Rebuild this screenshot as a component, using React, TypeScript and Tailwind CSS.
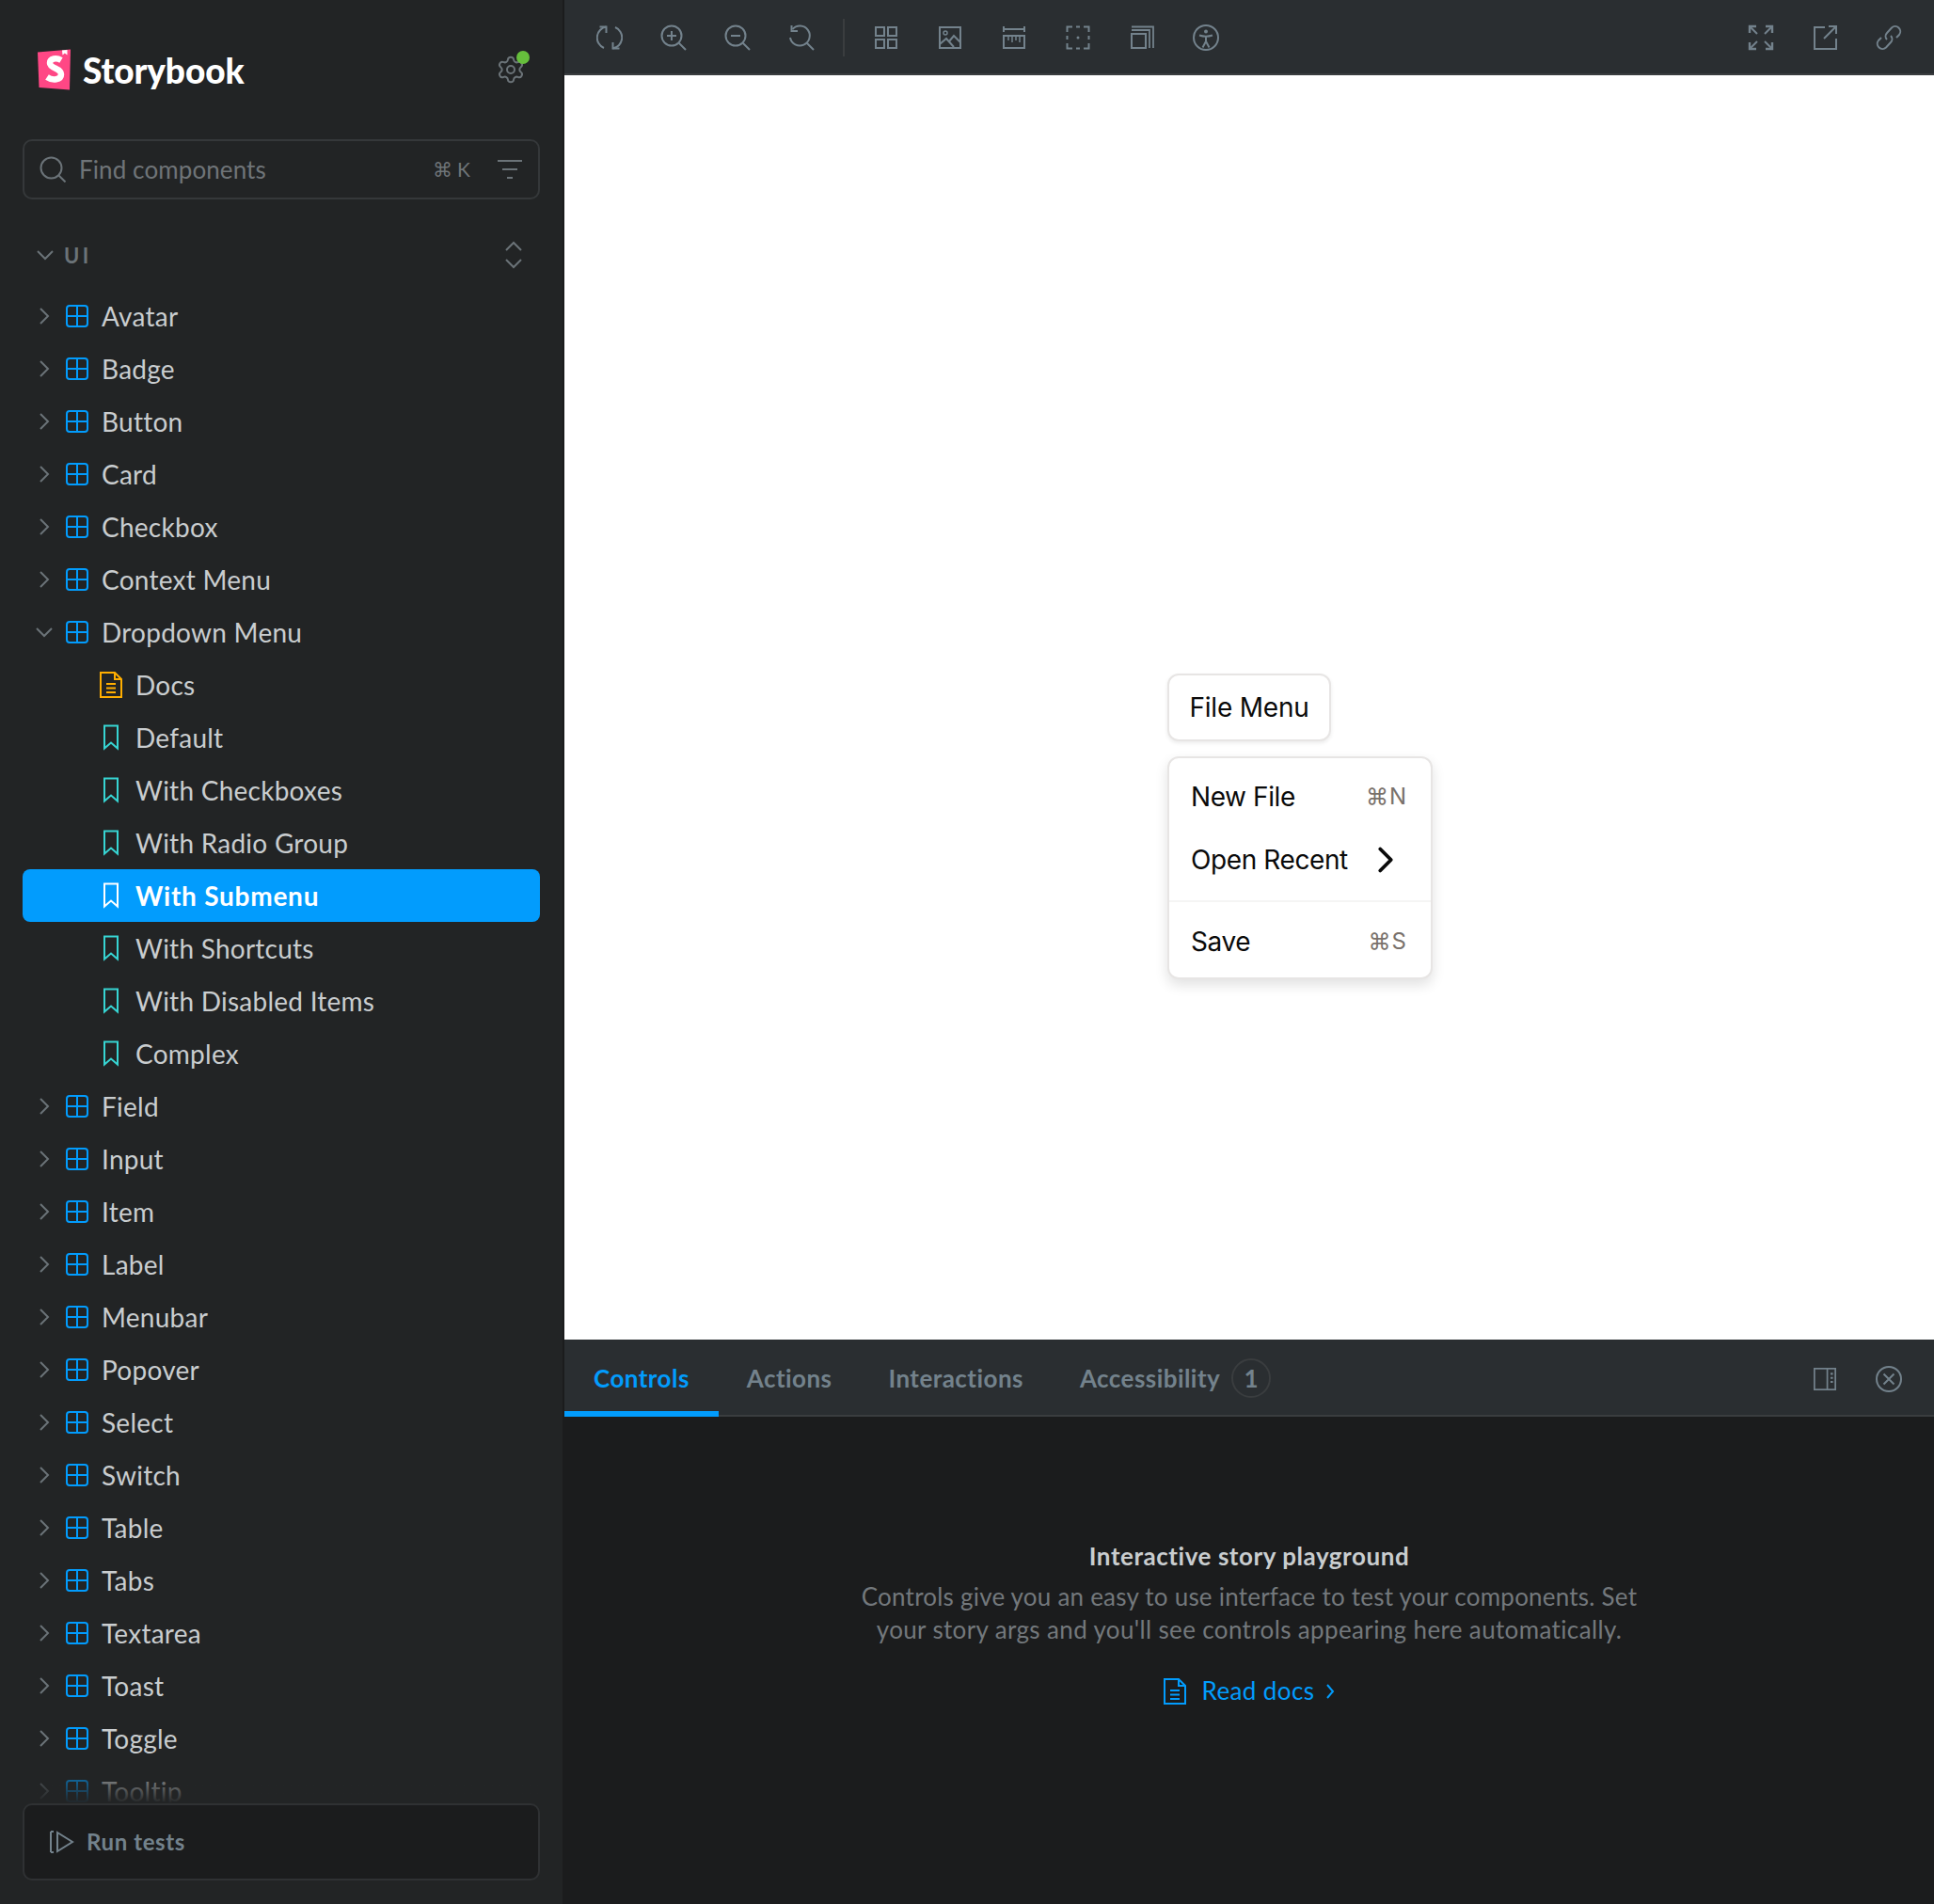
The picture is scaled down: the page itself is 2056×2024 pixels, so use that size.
import { ReactNode } from "react";
import { Settings } from "lucide-react";

const sans = "font-['Lato','Noto_Sans',sans-serif]";

const Ico = ({ children, size = 28, className = "text-[#73828c]" }: { children: ReactNode; size?: number; className?: string }) => (
  <svg width={size} height={size} viewBox="0 0 28 28" fill="none" stroke="currentColor" strokeWidth="2" className={className}>
    {children}
  </svg>
);

const ChevronR = () => (
  <svg width="12" height="20" viewBox="0 0 12 20" fill="none" stroke="#6b7378" strokeWidth="2" className="shrink-0">
    <path d="M2 2l8 8-8 8" />
  </svg>
);
const ChevronD = () => (
  <svg width="20" height="12" viewBox="0 0 20 12" fill="none" stroke="#6b7378" strokeWidth="2" className="shrink-0">
    <path d="M2 2l8 8 8-8" />
  </svg>
);

const ComponentIcon = () => (
  <svg width="24" height="24" viewBox="0 0 24 24" fill="none" stroke="#029cfd" strokeWidth="2" className="shrink-0">
    <rect x="1" y="1" width="22" height="22" rx="3" />
    <path d="M12 1v22M1 12h22" />
  </svg>
);

const Bookmark = ({ color = "#37d5d3" }: { color?: string }) => (
  <svg width="16" height="28" viewBox="0 0 16 28" fill="none" stroke={color} strokeWidth="2" className="shrink-0">
    <path d="M1 1.500h14v24l-7-6-7 6z" />
  </svg>
);

const DocIcon = ({ color }: { color: string }) => (
  <svg width="24" height="28" viewBox="0 0 24 28" fill="none" stroke={color} strokeWidth="2">
    <path d="M1 1h15l7 7v19H1z" />
    <path d="M16 1v7h7" />
    <path d="M7 13h10M7 17.500h10M7 22h10" />
  </svg>
);

type Row = { label: string; kind?: "comp" | "open" | "docs" | "story" | "active" };

const rows: Row[] = [
  { label: "Avatar" },
  { label: "Badge" },
  { label: "Button" },
  { label: "Card" },
  { label: "Checkbox" },
  { label: "Context Menu" },
  { label: "Dropdown Menu", kind: "open" },
  { label: "Docs", kind: "docs" },
  { label: "Default", kind: "story" },
  { label: "With Checkboxes", kind: "story" },
  { label: "With Radio Group", kind: "story" },
  { label: "With Submenu", kind: "active" },
  { label: "With Shortcuts", kind: "story" },
  { label: "With Disabled Items", kind: "story" },
  { label: "Complex", kind: "story" },
  { label: "Field" },
  { label: "Input" },
  { label: "Item" },
  { label: "Label" },
  { label: "Menubar" },
  { label: "Popover" },
  { label: "Select" },
  { label: "Switch" },
  { label: "Table" },
  { label: "Tabs" },
  { label: "Textarea" },
  { label: "Toast" },
  { label: "Toggle" },
  { label: "Tooltip" },
];

const TreeRow = ({ label, kind = "comp" }: Row) => {
  if (kind === "active") {
    return (
      <div className="flex h-14 shrink-0 items-center rounded-lg bg-[#029cfd] pl-[86px]">
        <Bookmark color="#ffffff" />
        <span className="ml-[18px] text-[28px] font-bold tracking-[0.75px] text-white">{label}</span>
      </div>
    );
  }
  if (kind === "story" || kind === "docs") {
    return (
      <div className="flex h-14 shrink-0 items-center">
        {kind === "docs" ? (
          <div className="ml-[82px] mr-[14px]">
            <DocIcon color="#ffae00" />
          </div>
        ) : (
          <div className="ml-[86px] mr-[18px]">
            <Bookmark />
          </div>
        )}
        <span className="text-[28px] tracking-[0.25px] text-[#c9cdcf]">{label}</span>
      </div>
    );
  }
  return (
    <div className="flex h-14 shrink-0 items-center">
      <div className="flex w-[46px] justify-center">{kind === "open" ? <ChevronD /> : <ChevronR />}</div>
      <ComponentIcon />
      <span className="ml-[14px] text-[28px] tracking-[0.25px] text-[#c9cdcf]">{label}</span>
    </div>
  );
};

const Sidebar = () => (
  <aside className="flex h-full w-[600px] shrink-0 flex-col border-r-2 border-[#1b1c1d] bg-[#222425] pl-[24px] pr-[24px]">
    {/* brand */}
    <div className="flex h-[148px] shrink-0 items-start">
      <div className="mt-[52px] ml-[16px] flex items-center">
        <svg width="36" height="44" viewBox="0 0 36 44">
          <path d="M0 3.500L35 .5 34 43.500 1.500 41z" fill="#ff4785" />
          <path d="M26 1.500l5.500-.5v5.500l-2.700-2-2.300 2z" fill="#ffffff" />
          <path d="M25 12C20 9 13 10 13 15c0 6 12 5 12 12 0 6-9 7-15 3" fill="none" stroke="#ffffff" strokeWidth="6.500" />
        </svg>
        <span className="ml-[12px] text-[37px] font-black leading-none tracking-[-0.1px] text-white">Storybook</span>
      </div>
      <div className="relative ml-auto mr-[15px] mt-[58px]">
        <Settings size={32} strokeWidth={1.5} color="#6b7378" />
        <div className="absolute -right-[4px] -top-[4px] h-[14px] w-[14px] rounded-full bg-[#66bf3c]" />
      </div>
    </div>

    {/* search */}
    <div className="flex h-[64px] shrink-0 items-center rounded-[10px] border-2 border-[#35383a] pl-[16px] pr-[17px]">
      <svg width="28" height="28" viewBox="0 0 28 28" fill="none" stroke="#6b7378" strokeWidth="2">
        <circle cx="12.500" cy="12.500" r="11" />
        <path d="M20.500 20.500l7 7" />
      </svg>
      <span className="ml-[14px] text-[26px] tracking-[0.1px] text-[#6f7478]">Find components</span>
      <span className="ml-auto text-[21px] text-[#6f7478]">⌘ K</span>
      <svg width="26" height="22" viewBox="0 0 26 22" stroke="#6b7378" strokeWidth="2" className="ml-[29px]">
        <path d="M0 2h26M5 11h16M10 20h6" />
      </svg>
    </div>

    {/* section header */}
    <div className="mt-[31px] flex h-[56px] shrink-0 items-center">
      <div className="ml-[14px]">
        <ChevronD />
      </div>
      <span className="ml-[10px] text-[22px] font-bold tracking-[3.5px] text-[#6b7378]">UI</span>
      <svg width="20" height="30" viewBox="0 0 20 30" fill="none" stroke="#6b7378" strokeWidth="2" className="ml-auto mr-[18px]">
        <path d="M2 10l8-8 8 8M2 20l8 8 8-8" />
      </svg>
    </div>

    {/* tree */}
    <div className="relative mt-[9px] flex min-h-0 flex-1 flex-col overflow-hidden">
      {rows.map((r) => (
        <TreeRow key={r.label} {...r} />
      ))}
      <div className="absolute bottom-0 left-0 right-0 h-[48px] bg-gradient-to-b from-[#22242500] to-[#222425]" />
    </div>

    {/* bottom */}
    <div className="mb-[25px] flex h-[82px] shrink-0 items-center rounded-[10px] border-2 border-[#2f3133] bg-[#1b1c1d] pl-[27px]">
      <svg width="26" height="24" viewBox="0 0 26 24" fill="none" stroke="#73828c" strokeWidth="2">
        <path d="M1 1v22M1 1h3M1 23h3M8 2l16 10-16 10z" />
      </svg>
      <span className="ml-[13px] text-[24px] font-bold tracking-[0.6px] text-[#73828c]">Run tests</span>
    </div>
  </aside>
);

const ToolBtn = ({ children }: { children: ReactNode }) => (
  <button className="flex h-14 w-14 items-center justify-center">{children}</button>
);

const Toolbar = () => (
  <div className="flex h-20 shrink-0 items-center border-b-2 border-[#3a3d3f] bg-[#2a2e31] px-5 pt-[2px]">
    <div className="flex gap-3">
      <ToolBtn>
        <Ico>
          <path d="M10.500 2.500A11.800 11.800 0 0 0 8 25M17.500 25.500A11.800 11.800 0 0 0 20 3" />
          <path d="M3.500 2.500h7V9M24.500 25.500h-7V19" />
        </Ico>
      </ToolBtn>
      <ToolBtn>
        <Ico>
          <circle cx="12" cy="12" r="10.500" />
          <path d="M19.500 19.500L27 27M12 7v10M7 12h10" />
        </Ico>
      </ToolBtn>
      <ToolBtn>
        <Ico>
          <circle cx="12" cy="12" r="10.500" />
          <path d="M19.500 19.500L27 27M7 12h10" />
        </Ico>
      </ToolBtn>
      <ToolBtn>
        <Ico>
          <path d="M4.500 5A10.500 10.500 0 1 1 2 14" />
          <path d="M19.500 19.500L27 27M3.500 1v6h6.500" />
        </Ico>
      </ToolBtn>
    </div>
    <div className="ml-4 mr-4 h-10 w-[2px] bg-[#3a3d3f]" />
    <div className="flex gap-3">
      <ToolBtn>
        <Ico>
          <rect x="3" y="3" width="9" height="9" />
          <rect x="16" y="3" width="9" height="9" />
          <rect x="3" y="16" width="9" height="9" />
          <rect x="16" y="16" width="9" height="9" />
        </Ico>
      </ToolBtn>
      <ToolBtn>
        <Ico>
          <rect x="3" y="3" width="22" height="22" />
          <circle cx="9" cy="9" r="2" strokeWidth="1.500" />
          <path d="M3 21l7-6 8 9M13 18l5-6 7 7" />
        </Ico>
      </ToolBtn>
      <ToolBtn>
        <Ico>
          <path d="M3 5h22M3 2v6M25 2v6" />
          <rect x="3" y="12" width="22" height="13" />
          <path d="M8 12v5M12 12v7M16 12v5M20 12v7" strokeWidth="1.500" />
        </Ico>
      </ToolBtn>
      <ToolBtn>
        <Ico>
          <path d="M2.500 8V2.500H8M12 2.500h4M20 2.500h5.500V8M25.500 12v4M25.500 20v5.500H20M16 25.500h-4M8 25.500H2.500V20M2.500 16v-4" />
          <circle cx="14" cy="14" r="1.500" fill="currentColor" stroke="none" />
        </Ico>
      </ToolBtn>
      <ToolBtn>
        <Ico>
          <rect x="3" y="10" width="15" height="15" />
          <path d="M3 6h19v19M3 2.500h23V25" strokeWidth="1.800" />
        </Ico>
      </ToolBtn>
      <ToolBtn>
        <Ico>
          <circle cx="14" cy="14" r="13" />
          <circle cx="14" cy="7.500" r="2" fill="currentColor" stroke="none" />
          <path d="M7 11.500c4.500 1.500 9.500 1.500 14 0M14 13v5M14 18l-3.500 6.500M14 18l3.500 6.500" />
        </Ico>
      </ToolBtn>
    </div>
    <div className="ml-auto flex gap-3">
      <ToolBtn>
        <Ico>
          <path d="M2 2l8 8M18 10l8-8M2 26l8-8M18 18l8 8" />
          <path d="M2 9V2h7M19 2h7v7M2 19v7h7M26 19v7h-7" strokeWidth="2.400" />
        </Ico>
      </ToolBtn>
      <ToolBtn>
        <Ico>
          <path d="M14 3H3v23h23V15" />
          <path d="M13 15L26 2M18 2h8v8" />
        </Ico>
      </ToolBtn>
      <ToolBtn>
        <Ico>
          <path d="M12 16a5 5 0 0 1 0-7l5-5.500a5.500 5.500 0 0 1 8 7.500l-3 3" />
          <path d="M16 12a5 5 0 0 1 0 7l-5 5.500a5.500 5.500 0 0 1-8-7.500l3-3" />
        </Ico>
      </ToolBtn>
    </div>
  </div>
);

const Canvas = () => (
  <div className="relative flex min-h-0 flex-1 items-center justify-center bg-white font-['Inter',sans-serif] text-[#0a0a0a]">
    <button className="flex h-[72px] w-[174px] items-center justify-center rounded-xl border-2 border-[#e7e5e4] bg-white text-[28px] tracking-[-0.2px] shadow-[0_2px_4px_rgba(0,0,0,0.08)]">
      File Menu
    </button>
    {/* open dropdown sits over the canvas */}
    <div className="absolute left-[641px] top-[724px] w-[282px] rounded-xl border-2 border-[#e7e5e4] bg-white pt-[15px] pb-[12px] tracking-[-0.4px] shadow-[0_6px_14px_rgba(0,0,0,0.12)]">
      <div className="flex h-[52px] items-center justify-between pl-[23px] pr-[25px] text-[28px]">
        <span>New File</span>
        <span className="text-[24px] tracking-[1px] text-[#79716b]">⌘N</span>
      </div>
      <div className="flex h-[80px] items-center pl-[23px] pt-[2px] text-[28px]">
        <span>Open Recent</span>
        <svg width="46" height="46" viewBox="0 0 24 24" fill="none" stroke="currentColor" strokeWidth="2" strokeLinecap="round" strokeLinejoin="round" className="ml-[17px]">
          <path d="m9 18 6-6-6-6" />
        </svg>
      </div>
      <div className="mt-[4px] h-[2px] bg-[#f5f5f4]" />
      <div className="mt-[16px] flex h-[52px] items-center justify-between pl-[23px] pr-[25px] text-[28px]">
        <span>Save</span>
        <span className="text-[24px] tracking-[1px] text-[#79716b]">⌘S</span>
      </div>
    </div>
  </div>
);

const tabs = ["Controls", "Actions", "Interactions", "Accessibility"];

const Panel = () => (
  <div className="flex h-[600px] shrink-0 flex-col bg-[#1b1c1d]">
    <div className="flex h-[82px] shrink-0 items-stretch border-b-2 border-[#3a3d3f] bg-[#2a2e31]">
      {tabs.map((t, i) => (
        <div
          key={t}
          className={
            i === 0
              ? "-mb-[2px] flex items-center border-b-[6px] border-[#029cfd] px-[31px] pt-[6px] text-[26px] font-bold tracking-[0.45px] text-[#029cfd]"
              : "flex items-center px-[30px] pt-[2px] text-[26px] font-bold tracking-[0.45px] text-[#73828c]"
          }
        >
          {t}
          {t === "Accessibility" && (
            <span className="-mr-[18px] ml-[12px] flex h-[42px] w-[42px] items-center justify-center rounded-full border-2 border-[#3a3d3f]">
              1
            </span>
          )}
        </div>
      ))}
      <div className="ml-auto mr-5 flex items-center gap-3 pt-[3px]">
        <ToolBtn>
          <Ico size={24} className="text-[#73828c]">
            <rect x="1" y="1" width="26" height="26" />
            <path d="M17 1v26" />
            <path d="M21 7.500h3M21 12.500h3M21 17.500h3" strokeWidth="2.500" />
          </Ico>
        </ToolBtn>
        <ToolBtn>
          <Ico>
            <circle cx="14" cy="14" r="13" />
            <path d="M8.500 8.500l11 11M19.500 8.500l-11 11" />
          </Ico>
        </ToolBtn>
      </div>
    </div>
    <div className="flex flex-col items-center pt-[131px]">
      <div className="text-[26px] font-bold leading-[35px] tracking-[0.55px] text-[#c9cdcf]">Interactive story playground</div>
      <div className="mt-[8px] w-[900px] text-center text-[26px] leading-[35px] tracking-[0.22px] text-[#73787c]">
        Controls give you an easy to use interface to test your components. Set
        <br />
        <span className="tracking-[0.36px]">your story args and you'll see controls appearing here automatically.</span>
      </div>
      <div className="mt-[28px] flex items-center text-[26px] tracking-[0.4px] text-[#029cfd]">
        <DocIcon color="#029cfd" />
        <span className="ml-[17px]">Read docs</span>
        <svg width="10" height="16" viewBox="0 0 10 16" fill="none" stroke="#029cfd" strokeWidth="2" className="ml-[12px]">
          <path d="M2 1l6 7-6 7" />
        </svg>
      </div>
    </div>
  </div>
);

export default function App() {
  return (
    <div className={`flex h-[2024px] w-[2056px] overflow-hidden ${sans}`}>
      <Sidebar />
      <main className="flex min-w-0 flex-1 flex-col">
        <Toolbar />
        <Canvas />
        <Panel />
      </main>
    </div>
  );
}
